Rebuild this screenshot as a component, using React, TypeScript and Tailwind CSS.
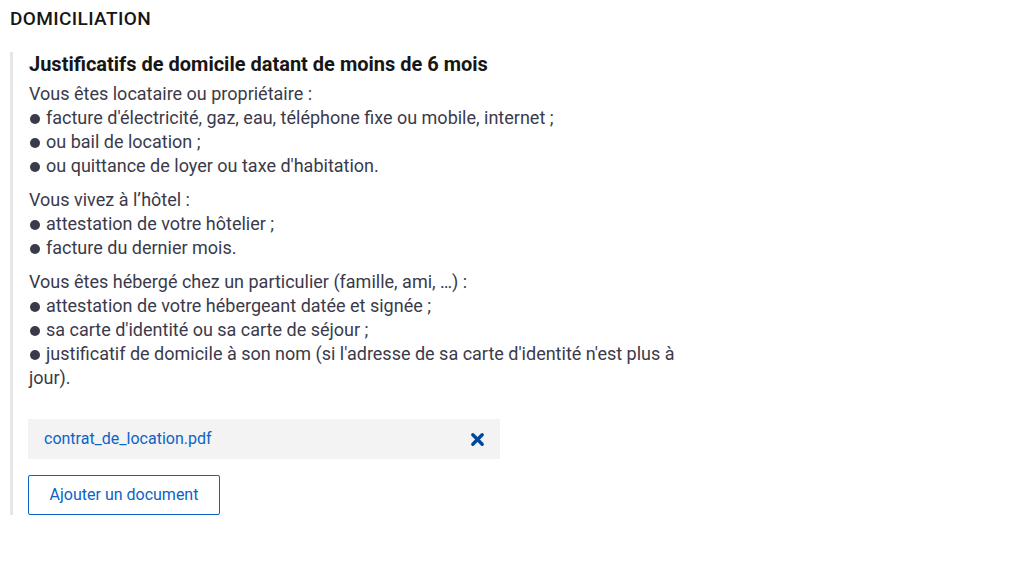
import { useState } from "react";

const groups = [
  {
    intro: "Vous êtes locataire ou propriétaire :",
    items: [
      "facture d'électricité, gaz, eau, téléphone fixe ou mobile, internet ;",
      "ou bail de location ;",
      "ou quittance de loyer ou taxe d'habitation.",
    ],
  },
  {
    intro: "Vous vivez à l’hôtel :",
    items: ["attestation de votre hôtelier ;", "facture du dernier mois."],
  },
  {
    intro: "Vous êtes hébergé chez un particulier (famille, ami, …) :",
    items: [
      "attestation de votre hébergeant datée et signée ;",
      "sa carte d'identité ou sa carte de séjour ;",
      "justificatif de domicile à son nom (si l'adresse de sa carte d'identité n'est plus à jour).",
    ],
  },
];

export default function App() {
  const [files, setFiles] = useState(["contrat_de_location.pdf"]);

  return (
    <div className="min-h-[564px] w-[1020px] bg-white font-['Roboto',sans-serif] pl-[10px] pt-[7px]">
      {/* Section title */}
      <h2 className="text-[19px] leading-[24px] font-medium tracking-[0.02em] text-[#161616]">DOMICILIATION</h2>

      <div className="mt-[21px] border-l-[3px] border-[#e6e6e6] pl-[16px]">
        <h3 className="text-[20px] leading-[24px] font-bold text-[#161616]">
          Justificatifs de domicile datant de moins de 6 mois
        </h3>

        <div className="mt-[6px] w-[660px] text-[18px] leading-[24px] text-[#3a3a4b]">
          {groups.map((g, i) => (
            <div key={i} className={i > 0 ? "mt-[10px]" : ""}>
              <p>{g.intro}</p>
              {g.items.map((item) => (
                <p key={item}>
                  <span className="ml-[1px] mr-[6px] inline-block h-[10px] w-[10px] rounded-full bg-[#3a3a4b] align-[0px]" />
                  {item}
                </p>
              ))}
            </div>
          ))}
        </div>

        {/* Uploaded files */}
        <div className="mt-[29px] flex flex-col gap-2">
          {files.map((f) => (
            <div
              key={f}
              className="flex h-[40px] w-[472px] -ml-[1px] items-center justify-between bg-[#f3f3f3] pl-[16px] pr-[15px]"
            >
              <span className="text-[16px] text-[#0b63c6]">{f}</span>
              <button onClick={() => setFiles(files.filter((x) => x !== f))} className="text-[#00469b]">
                <svg width="15" height="15" viewBox="0 0 16 16">
                  <path d="M3 3 L13 13 M13 3 L3 13" stroke="currentColor" strokeWidth="3.6" strokeLinecap="round" />
                </svg>
              </button>
            </div>
          ))}
        </div>

        <button className="mt-[16px] -ml-[1px] h-[40px] w-[192px] rounded-[2px] border border-[#0b63c6] text-[16px] text-[#0b63c6]">
          Ajouter un document
        </button>
      </div>
    </div>
  );
}
